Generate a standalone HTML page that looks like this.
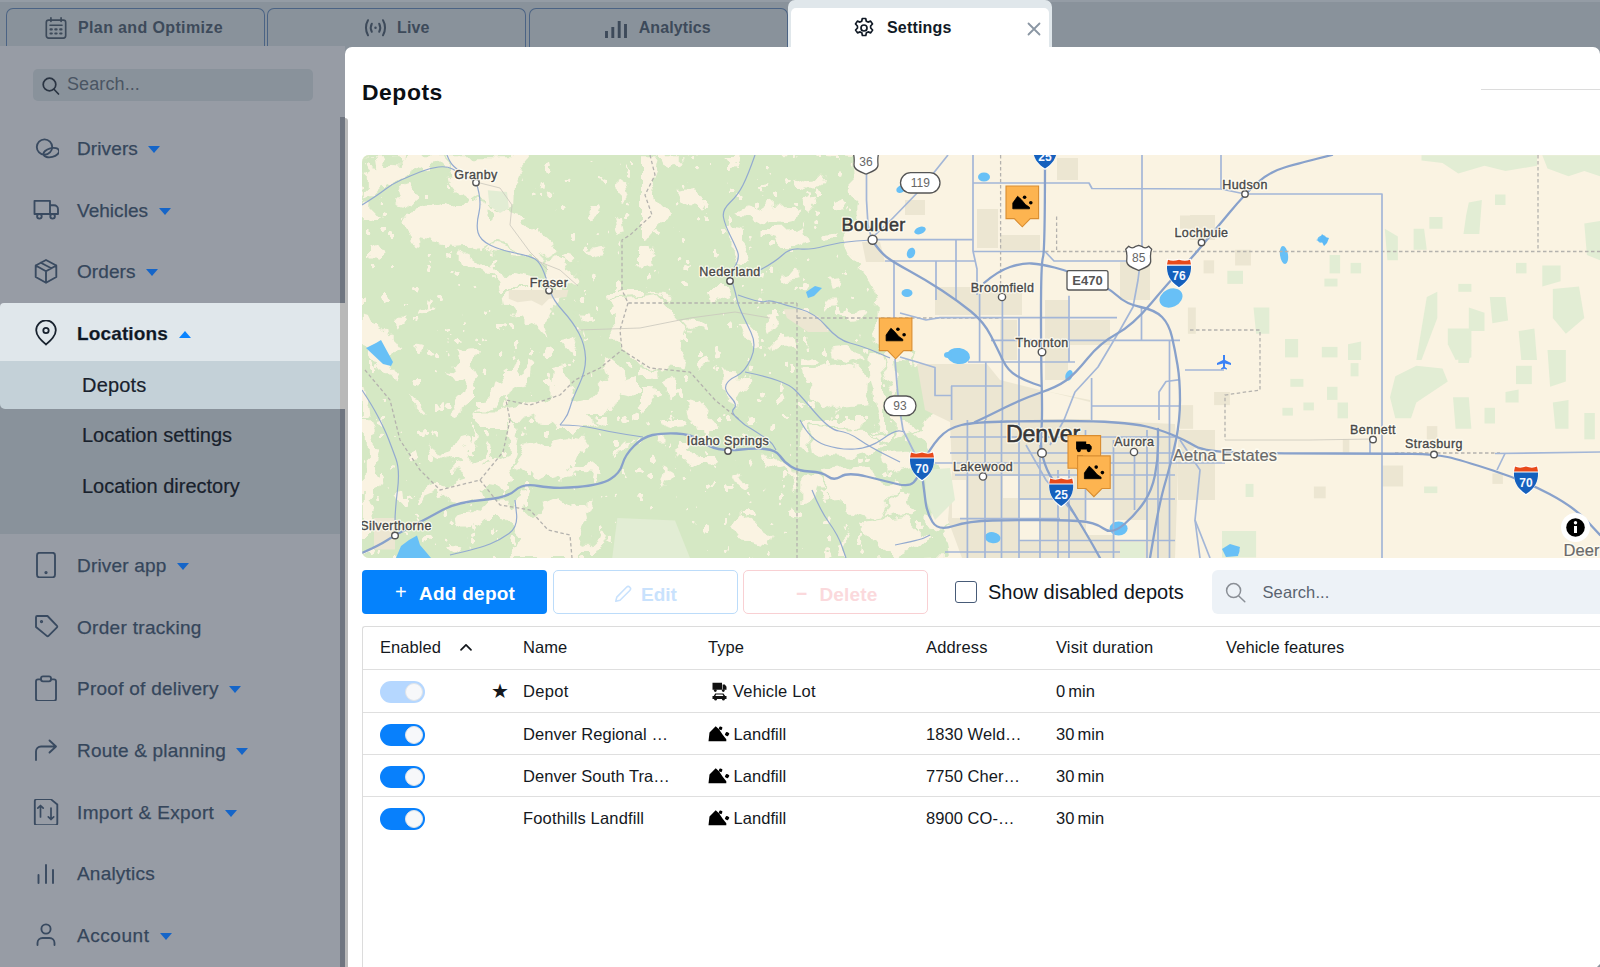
<!DOCTYPE html>
<html lang="en">
<head>
<meta charset="utf-8">
<title>Depots - Settings</title>
<style>
*{box-sizing:border-box;margin:0;padding:0}
html,body{width:1600px;height:967px;overflow:hidden}
body{font-family:"Liberation Sans",sans-serif;background:#89929b;position:relative;color:#1c2530}
.abs{position:absolute}
/* top tabs */
#topbar{position:absolute;left:0;top:0;width:1600px;height:46px;background:#89929b}
#topbar .strip{position:absolute;left:0;top:0;width:1600px;height:2px;background:#949ca5}
.tab{position:absolute;top:8px;height:40px;border:1.500px solid #4b6384;border-bottom:none;border-radius:7px 7px 0 0;background:#89929b;color:#3d4a5a;font-weight:bold;font-size:16px}
.tab span{position:absolute;top:9.500px;white-space:nowrap}
.tab svg{position:absolute}
#tab4{position:absolute;left:788px;top:0;width:264px;height:47px;background:#e0e7eb;border-radius:7px 7px 0 0}
#tab4 .in{position:absolute;left:3px;top:8px;right:3px;bottom:0;background:#fff;border-radius:5px 5px 0 0}
#tab4 span{position:absolute;left:99px;top:19px;font-weight:bold;font-size:16px;color:#111a26}
/* sidebar */
#side{position:absolute;left:0;top:46px;width:345px;height:921px;background:#979ca5}
#sb{position:absolute;left:340px;top:117px;width:5px;height:850px;background:#6f7580}
#sb2{position:absolute;left:345px;top:118px;width:3px;height:849px;background:#b9b9b9;z-index:5;border-radius:0 3px 0 0}#sb3{position:absolute;left:340px;top:303px;width:5px;height:106px;background:#b9b9b9;z-index:5}
#ssearch{position:absolute;left:33px;top:23px;width:280px;height:32px;border-radius:5px;background:#89929b}
#ssearch span{position:absolute;left:34px;top:5px;font-size:18px;letter-spacing:.1px;color:#4a5563}
.mi{position:absolute;left:77px;font-size:19px;color:#35465b;-webkit-text-stroke:.25px #35465b;white-space:nowrap;line-height:24px}
.mi i{display:inline-block;width:0;height:0;border-left:6.500px solid transparent;border-right:6.500px solid transparent;border-top:7.500px solid #1565c8;margin-left:10.500px;vertical-align:2.500px}
.ic{position:absolute;left:33px;width:26px;height:26px}
.ic svg{width:26px;height:26px;fill:none;stroke:#394a60;stroke-width:1.850;stroke-linecap:round;stroke-linejoin:round}
#loc{position:absolute;left:0;top:303px;width:340px;height:58px;background:#e0e7eb;border-radius:4px 0 0 0}
#dep{position:absolute;left:0;top:361px;width:340px;height:48px;background:#c4d1d8;border-radius:0 0 0 5px}
#sub{position:absolute;left:0;top:361px;width:340px;height:173px;background:#89929b}
.smi{position:absolute;left:82px;font-size:20px;color:#18212c;-webkit-text-stroke:.2px #18212c;white-space:nowrap;line-height:24px}
/* modal */
#modal{position:absolute;left:345px;top:47px;width:1255px;height:920px;background:#fff;border-radius:7px 7px 0 0}
h1{position:absolute;left:17px;top:31px;letter-spacing:.55px;font-size:22.900px;font-weight:bold;color:#0b0f14;line-height:28px}
#hr{position:absolute;left:1136px;top:42px;width:119px;height:1px;background:#dcdcdc}
#map{position:absolute;left:17px;top:108px;width:1238px;height:403px;border-radius:7px 0 0 7px;overflow:hidden;background:#faf3e2}
.btn{position:absolute;top:523px;height:44px;border-radius:4px;font-size:19px;text-align:center;line-height:47px;white-space:nowrap}
#b1{left:17px;width:185px;background:#0582fc;color:#fff;font-weight:bold}
#b2{left:208px;width:184.500px;border:1.300px solid #bcdcfa;color:#c9e2fd;font-weight:bold;border-radius:5px}
#b3{left:398px;width:184.500px;border:1.300px solid #f9d0d3;color:#fbd9dc;font-weight:bold;border-radius:5px}
#cb{position:absolute;left:609.5px;top:534px;width:22px;height:21.500px;border:1.500px solid #475b78;border-radius:3px;background:#fff}
#cbl{position:absolute;left:643px;top:532.500px;font-size:20px;color:#10161d;line-height:24px;white-space:nowrap}
#srch{position:absolute;left:867px;top:523px;width:388px;height:44px;background:#edf2f7;border-radius:6px 0 0 6px}
#srch span{position:absolute;left:50.500px;top:12.500px;font-size:16.500px;color:#59636f;letter-spacing:.1px}
#tbl{position:absolute;left:17px;top:579px;width:1238px;height:341px;border-left:1.5px solid #dcdcdc;border-top:1.5px solid #dcdcdc;border-radius:3px 0 0 0}
.hl{position:absolute;left:0;width:1238px;height:1.300px;background:#dfdfdf}
.t{letter-spacing:.06px;position:absolute;font-size:16.5px;color:#14181d;white-space:nowrap;line-height:20px}
.tg{position:absolute;left:16.800px;width:45px;height:22px;margin-top:.8px;border-radius:11px;background:#0880fc}
.tg b{position:absolute;right:2px;top:2px;width:18px;height:18px;border-radius:9px;background:#f7f8fa;border:1px solid #dfe3e8}
.tg.dis{background:#b5d7ff}
</style>
</head>
<body>
<div id="topbar"><div class="strip"></div>
<div class="tab" style="left:6px;width:259px"><svg style="left:36.500px;top:6.500px" width="24" height="24" viewBox="0 0 26 26" fill="none" stroke="#3d4a5a" stroke-width="1.800" stroke-linecap="round" stroke-linejoin="round"><rect x="2.500" y="4.500" width="21" height="19.500" rx="2.500"/><path d="M7.500 2v4M18.500 2v4M6.500 10h13" /><path d="M7 14.500h1.500M12.200 14.500h1.500M17.500 14.500h1.500M7 19h1.500M12.200 19h1.500M17.500 19h1.500" stroke-width="2.200"/></svg><span style="letter-spacing:0.37px;left:71px">Plan and Optimize</span></div>
<div class="tab" style="left:267px;width:259px"><svg style="left:95.500px;top:8px" width="23" height="21.500" viewBox="0 0 26 24" fill="none" stroke="#3d4a5a" stroke-width="2.300" stroke-linecap="round"><path d="M4.500 3.500c-3 5-3 12 0 17M21.500 3.500c3 5 3 12 0 17M8.800 7.500c-1.600 3-1.600 6 0 9M17.200 7.500c1.600 3 1.600 6 0 9"/><circle cx="13" cy="12" r="1.400" fill="#3d4a5a" stroke="none"/></svg><span style="letter-spacing:0.12px;left:129px">Live</span></div>
<div class="tab" style="left:529px;width:259px"><svg style="left:73px;top:6px" width="26" height="26" viewBox="0 0 26 26" fill="none" stroke="#3d4a5a" stroke-width="2.900"><path d="M3.500 23v-7M9.800 23v-11M16.200 23v-17M22.500 23v-14"/></svg><span style="letter-spacing:0.1px;left:108.700px">Analytics</span></div>
</div>
<div id="side">
<div id="ssearch"><svg style="position:absolute;left:8px;top:7px" width="20" height="20" viewBox="0 0 20 20" fill="none" stroke="#2a3442" stroke-width="1.700" stroke-linecap="round"><circle cx="8.500" cy="8.500" r="6.300"/><path d="M13.200 13.500l4.300 4.500"/></svg><span>Search...</span></div>
</div>
<div id="sb"></div>
<div id="sub"></div>
<div id="loc"></div>
<div id="dep"></div>
<div id="tab4"><div class="in"></div><svg style="position:absolute;left:64px;top:16px" width="24" height="24" viewBox="0 0 24 24" fill="none" stroke="#111a26" stroke-width="1.700" stroke-linejoin="round"><path d="M10.300 2.500h3.400l.6 2.700 1.700.9 2.600-1 1.900 2.900-1.900 2 .1 2 1.900 2-1.900 2.900-2.600-1-1.700.9-.6 2.700h-3.400l-.6-2.700-1.700-.9-2.600 1-1.900-2.900 1.900-2-.1-2-1.900-2 1.900-2.900 2.600 1 1.700-.9z"/><circle cx="12" cy="12" r="3"/></svg><span style="letter-spacing:0.17px">Settings</span><svg style="position:absolute;left:239px;top:22px" width="14" height="14" viewBox="0 0 14 14" stroke="#8a96a3" stroke-width="1.800" stroke-linecap="round"><path d="M1.500 1.500l11 11M12.500 1.500l-11 11"/></svg></div>

<div class="mi" style="letter-spacing:0.11px;top:137px">Drivers<i></i></div>
<div class="mi" style="letter-spacing:0.03px;top:199px">Vehicles<i></i></div>
<div class="mi" style="letter-spacing:0.07px;top:260px">Orders<i></i></div>
<div class="mi" style="letter-spacing:0.14px;top:322px;font-weight:bold;color:#0f1721">Locations<i style="border-top:none;border-bottom:7.500px solid #0a84ff"></i></div>
<div class="smi" style="letter-spacing:0.2px;top:373px">Depots</div>
<div class="smi" style="top:423px">Location settings</div>
<div class="smi" style="top:474px">Location directory</div>
<div class="mi" style="letter-spacing:0.18px;top:554px">Driver app<i></i></div>
<div class="mi" style="letter-spacing:0.31px;top:616px">Order tracking</div>
<div class="mi" style="letter-spacing:0.26px;top:677px">Proof of delivery<i></i></div>
<div class="mi" style="letter-spacing:0.2px;top:739px">Route &amp; planning<i></i></div>
<div class="mi" style="letter-spacing:0.35px;top:801px">Import &amp; Export<i></i></div>
<div class="mi" style="letter-spacing:0.2px;top:862px">Analytics</div>
<div class="mi" style="letter-spacing:0.56px;top:924px">Account<i></i></div>


<div class="ic" style="top:135px"><svg viewBox="0 0 26 26"><circle cx="11.500" cy="12" r="7.700"/><ellipse cx="18.300" cy="17.600" rx="8" ry="4.400" transform="rotate(-14 18.300 17.600)"/></svg></div>
<div class="ic" style="top:196px"><svg viewBox="0 0 26 26"><path d="M1.500 4.800h15.500v13.200h-15.500zM17 9.200h4a4 4 0 0 1 4 4v4.800h-8"/><circle cx="6.400" cy="20.300" r="2.300"/><circle cx="19.600" cy="20.300" r="2.300"/></svg></div>
<div class="ic" style="top:258px"><svg viewBox="0 0 26 26"><path d="M13 2L23.300 7.500V19L13 24.800L2.700 19V7.500zM2.700 7.500L13 13.300L23.300 7.500M13 13.300V24.800M7.800 4.800L18.300 10.300"/></svg></div>
<div class="ic" style="top:320px"><svg viewBox="0 0 26 26" style="stroke:#18222e;stroke-width:1.800"><path d="M13 24.500c-5-4.500-9.800-8.800-9.800-14.300a9.800 9.800 0 0 1 19.600 0c0 5.500-4.800 9.800-9.800 14.300z"/><circle cx="13" cy="10.500" r="2.700"/></svg></div>
<div class="ic" style="top:552px"><svg viewBox="0 0 26 26"><rect x="4" y="0.800" width="18" height="24.500" rx="2.500"/><circle cx="13" cy="20.600" r="0.700"/></svg></div>
<div class="ic" style="top:613px"><svg viewBox="0 0 26 26"><path d="M3 4.200a1.200 1.200 0 0 1 1.200-1.200h10.300l9.500 9.800a1.200 1.200 0 0 1 0 1.600l-8.500 8.500a1.200 1.200 0 0 1-1.700 0L3 14z"/><circle cx="8.500" cy="8.500" r="0.700"/></svg></div>
<div class="ic" style="top:675px"><svg viewBox="0 0 26 26"><path d="M8 4.300h-3a2 2 0 0 0-2 2v17.500a2 2 0 0 0 2 2h16a2 2 0 0 0 2-2v-17.500a2 2 0 0 0-2-2h-3"/><rect x="8" y="1.300" width="10" height="5" rx="2"/></svg></div>
<div class="ic" style="top:737px"><svg viewBox="0 0 26 26"><path d="M3 23v-8.500a5 5 0 0 1 5-5h15M16.500 3.500l6.500 6-6.500 6"/></svg></div>
<div class="ic" style="top:799px"><svg viewBox="0 0 26 26"><path d="M1.800 1.200a2 2 0 0 1 2-2h14l6.500 5.500v19.500a2 2 0 0 1-2 2h-18.500a2 2 0 0 1-2-2z" transform="translate(0,-0.200) scale(1,0.960) translate(0,1.200)"/><path d="M7.500 18v-11.500M4.800 9.200l2.700-2.700 2.700 2.700M18 9v11.500M15.300 17.800l2.700 2.700 2.700-2.700" style="stroke-width:1.700"/></svg></div>
<div class="ic" style="top:861px"><svg viewBox="0 0 26 26" style="stroke-width:1.900"><path d="M5.500 22v-8M13 22v-18M20 22v-13"/></svg></div>
<div class="ic" style="top:922px"><svg viewBox="0 0 26 26"><circle cx="13" cy="7" r="4.600"/><path d="M4.500 23v-2a5 5 0 0 1 5-5h7a5 5 0 0 1 5 5v2"/></svg></div>

<div id="modal">
<h1>Depots</h1>
<div id="hr"></div>
<div id="map"><svg width="1238" height="403" viewBox="362 155 1238 403" style="display:block;font-family:'Liberation Sans',sans-serif">
<rect x="362" y="155" width="1238" height="403" fill="#faf3e2"/>
<defs><filter id="rough" x="-5%" y="-5%" width="110%" height="110%"><feTurbulence type="fractalNoise" baseFrequency="0.045" numOctaves="3" seed="7" result="n"/><feDisplacementMap in="SourceGraphic" in2="n" scale="22" xChannelSelector="R" yChannelSelector="G"/></filter><clipPath id="mapclip"><rect x="362" y="155" width="1238" height="403"/></clipPath></defs>
<g filter="url(#rough)">
<polygon points="342,135 852,155 853,200 850,225 843,240 850,256 866,275 874,300 873,330 884,360 888,385 903,400 907,430 925,445 938,470 928,500 942,520 950,558 342,578" fill="#d5e8c4"/>
<g fill="#faf3e2" stroke="#d5e8c4" stroke-width="2" stroke-linejoin="round">
<polygon points="361.8,155.3 445.8,155.3 451,165.8 437,167.5 426.5,169.3 412.5,176.3 398.5,181.5 382.8,188.5 370.5,200.8 361.8,202.5"/>
<polygon points="445.8,155.3 526.3,155.3 528,164 518.4,174.5 514,185 513.1,207.8 507,218.3 498.3,220 489.5,232.3 487.8,239.3 475.5,241 472,232.3 465,237.5 459.8,227 466.8,216.5 461.5,207.8 468.5,199 458,193.8 454.5,185 447.5,183.3 444,169.3"/>
<polygon points="475.5,241 487.8,239.3 500,244.5 517.5,248 536.8,251.5 552.5,253.3 563,262 577,270.8 580.5,283 570,290 557.8,290 545.5,279.5 543.8,263.8 528,258.5 507,256.8 489.5,251.5"/>
<polygon points="458,248 472,255 482.5,263.8 500,270.8 517.5,272.5 535,276 545.5,290 500,290 496.5,279.5 482.5,272.5 472,270.8 461.5,263.8"/>
<polygon points="361.8,206 372.3,207.8 379.3,216.5 370.5,223.5 361.8,225.3"/>
<polygon points="395,190.3 412.5,185 417.8,195.5 410.8,207.8 398.5,204.3"/>
<polygon points="417.8,216.5 430,213 438.8,223.5 433.5,234 421.3,228.8"/>
<polygon points="367,248 377.5,244.5 384.5,255 375.8,262 367,258.5"/>
<polygon points="585.8,204.3 598,200.8 603.3,213 592.8,218.3"/>
<polygon points="619,179.8 629.5,176.3 633,195.5 622.5,202.5 617.3,192"/>
<polygon points="535,181.5 542,179.8 540.3,192 533.3,193.8"/>
<polygon points="613.8,214.8 622.5,216.5 626,232.3 617.3,234"/>
<polygon points="557.8,255 570,251.5 580.5,258.5 573.5,265.5"/>
<polygon points="587.5,248 605,244.5 608.5,255 594.5,258.5"/>
<polygon points="640,155.3 661,155.3 657.5,171 652.3,185 659.3,202.5 668,211.3 662.8,223.5 652.3,234 640,241"/>
<polygon points="661,155.3 685.5,155.3 680.3,164 666.3,167.5"/>
<polygon points="675,190.3 690.8,186.8 697.8,195.5 706.5,200.8 701.3,209.5 687.3,207.8 680.3,200.8"/>
<polygon points="731,207.8 745,204.3 762.5,209.5 773,202.5 790.5,200.8 797.5,209.5 794,220 780,223.5 769.5,220 755.5,223.5 738,220"/>
<polygon points="727.5,227 745,230.5 752,241 748.5,258.5 738,262 731,248"/>
<polygon points="762.5,227 773,227 808,225.3 811.5,241 794,248 780,248 773,241 762.5,237.5"/>
<polygon points="790.5,183.3 808,176.3 823.8,174.5 822,185 801,192 790.5,192"/>
<polygon points="802.8,200.8 815,197.3 818.5,207.8 811.5,216.5 802.8,213"/>
<polygon points="720.5,157 745,157 743.3,165.8 727.5,167.5"/>
<polygon points="640,248 650.5,244.5 659.3,255 650.5,265.5 640,269"/>
<polygon points="680.3,262 692.5,265.5 689,276 680.3,274.3"/>
<polygon points="774.8,269 797.5,265.5 801,276 780,279.5"/>
<polygon points="825.5,277.8 843,276 841.3,288.3 829,290"/>
<polygon points="832.5,199 843,195.5 846.5,207.8 836,209.5"/>
<polygon points="823.8,234 839.5,232.3 837.8,241 825.5,242.8"/>
<polygon points="762.5,181.5 773,179.8 771.3,186.8 762.5,188.5"/>
<polygon points="451,349.5 472,346 479,354.8 475.5,367 480.8,377.5 472,388 472,402 458,412.5 451,409 461.5,395 463.3,381 451,377.5 445.8,370.5 454.5,363.5"/>
<polygon points="507,365.3 514,363.5 517.5,372.3 524.5,367 528,360 533.3,363.5 531.5,377.5 522.8,388 510.5,396.8 500,403.8 493,412.5 482.5,416 472,412.5 482.5,402 493,393.3 494.8,384.5 501.8,384.5 507,377.5"/>
<polygon points="472,412.5 493,412.5 510.5,405.5 535,402 552.5,395 552.5,381 554.3,365.3 561.3,363.5 564.8,374 570,388 571.8,402 587.5,398.5 596.3,388 605,377.5 601.5,363.5 608.5,360 622.5,370.5 633,377.5 640,374 640,398.5 622.5,395 617.3,412.5 605,423 587.5,430 549,430 552.5,423 535,419.5 517.5,423 514,430 482.5,430 473.8,423"/>
<polygon points="507,290 568.3,290 566.5,300.5 552.5,311 547.3,325 542,333.8 535,325 528,328.5 517.5,318 510.5,321.5 514,307.5 508.8,300.5"/>
<polygon points="559.5,340.8 575.3,337.3 580.5,347.8 566.5,351.3"/>
<polygon points="608.5,290 640,290 640,333.8 633,347.8 622.5,347.8 617.3,335.5 622.5,321.5 612,312.8"/>
<polygon points="361.8,309.3 370.5,311 377.5,325 389.8,335.5 398.5,347.8 391.5,360 398.5,377.5 402,384.5 395,384.5 386.3,372.3 377.5,368.8 365.3,353 361.8,347.8"/>
<polygon points="391.5,323.3 402,312.8 407.3,318 398.5,332"/>
<polygon points="410.8,340.8 421.3,342.5 426.5,349.5 417.8,353"/>
<polygon points="361.8,388 370.5,395 372.3,412.5 365.3,430 361.8,430"/>
<polygon points="409,393.3 417.8,402 426.5,412.5 421.3,414.3 412.5,405.5"/>
<polygon points="417.8,309.3 437,304 438.8,307.5 421.3,316.3"/>
<polygon points="575.3,311 585.8,312.8 587.5,323.3 578.8,321.5"/>
<polygon points="640,323.3 650.5,319.8 661,325 675,321.5 685.5,318 699.5,319.8 710,323.3 706.5,330.3 692.5,328.5 682,333.8 675,342.5 664.5,340.8 654,347.8 647,342.5 640,347.8"/>
<polygon points="706.5,290 731,290 734.5,300.5 724,304 710,300.5"/>
<polygon points="640,363.5 654,360 661,367 654,375.8 640,377.5"/>
<polygon points="657.5,381 671.5,377.5 680.3,388 675,398.5 662.8,395"/>
<polygon points="722.3,372.3 745,374 752,381 745,388 738,398.5 739.8,409 731,412.5 724,402 727.5,395 722.3,384.5"/>
<polygon points="738,326.8 752,325 762.5,335.5 766,347.8 757.3,353 752,342.5 743.3,339"/>
<polygon points="762.5,316.3 773,314.5 778.3,325 769.5,330.3"/>
<polygon points="769.5,342.5 794,340.8 797.5,351.3 780,353 771.3,349.5"/>
<polygon points="829,349.5 846.5,347.8 860.5,353 867.5,363.5 857,365.3 841.3,360 830.8,358.3"/>
<polygon points="837.8,377.5 850,377.5 860.5,388 850,398.5 841.3,391.5"/>
<polygon points="825.5,398.5 837.8,396.8 844.8,409 832.5,416 825.5,409"/>
<polygon points="867.5,347.8 881.5,351.3 888.5,360 885,372.3 885,430 872.8,430 878,412.5 874.5,388 869.3,372.3"/>
<polygon points="685.5,398.5 699.5,402 710,416 720.5,430 692.5,430 689,416"/>
<polygon points="640,388 650.5,388 654,402 647,412.5 640,412.5"/>
<polygon points="773,402 785.3,388 790.5,395 780,410.8"/>
<polygon points="802.8,356.5 813.3,354.8 815,365.3 804.5,367"/>
<polygon points="671.5,349.5 682,347.8 685.5,356.5 675,360"/>
<polygon points="692.5,360 706.5,356.5 713.5,367 699.5,370.5"/>
<polygon points="822,300.5 832.5,300.5 836,311 825.5,312.8"/>
<polygon points="846.5,307.5 865.8,305.8 867.5,316.3 850,318"/>
<polygon points="640,295.3 657.5,291.8 675,295.3 671.5,300.5 650.5,302.3 640,304"/>
<polygon points="361.8,420 372.3,420 375.8,430.5 370.5,441 377.5,451.5 374,465.5 381,477.8 375.8,490 370.5,502.3 377.5,518 370.5,532 361.8,532"/>
<polygon points="428.3,437.5 435.3,442.8 442.3,455 451,453.3 458,437.5 465,435.8 468.5,444.5 473.8,430.5 477.3,428.8 475.5,442.8 468.5,458.5 479,455 489.5,439.3 491.3,448 482.5,462 494.8,460.3 505.3,455 510.5,437.5 503.5,420 517.5,420 521,437.5 517.5,455 514,465.5 517.5,476 508.8,481.3 503.5,490 486,486.5 482.5,497 465,500.5 451,497 438.8,500.5 435.3,493.5 419.5,500.5 414.3,504 417.8,493.5 430,486.5 447.5,483 465,477.8 458,472.5 451,472.5 451,467.3 458,462 447.5,463.8 437,458.5 430,448"/>
<polygon points="524.5,442.8 535,441 549,448 552.5,437.5 566.5,434 580.5,437.5 587.5,448 577,455 568.3,463.8 580.5,467.3 594.5,463.8 605,470.8 594.5,476 570,474.3 552.5,479.5 535,472.5 524.5,470.8 514,465.5 521,455"/>
<polygon points="458,514.5 472,511 482.5,502.3 508.8,500.5 512.3,511 517.5,493.5 528,490 531.5,498.8 528,511 535,518 545.5,504 561.3,497 570,502.3 587.5,495.3 592.8,497 585.8,511 587.5,525 580.5,539 587.5,549.5 596.3,540.8 601.5,528.5 608.5,532 601.5,546 594.5,557.9 510.5,557.9 508.8,546 517.5,532 510.5,528.5 500,518 487.8,518 480.8,525 472,521.5 465,528.5 459.8,525"/>
<polygon points="451,540.8 461.5,542.5 458,553 449.3,549.5"/>
<polygon points="591,420 622.5,420 626,427 605,427"/>
<polygon points="622.5,441 633,439.3 629.5,448 619,451.5"/>
<polygon points="407.3,451.5 414.3,449.8 417.8,460.3 410.8,463.8"/>
<polygon points="393.3,493.5 403.8,490 405.5,500.5 396.8,502.3"/>
<polygon points="661,420 685.5,420 689,428.8 675,430.5 662.8,427"/>
<polygon points="652.3,437.5 664.5,437.5 664.5,444.5 654,444.5"/>
<polygon points="675,449.8 685.5,446.3 692.5,455 713.5,455 724,460.3 710,465.5 697.8,463.8 690.8,470.8 687.3,462 676.8,458.5"/>
<polygon points="662.8,463.8 673.3,469 675,477.8 666.3,479.5 662.8,490 659.3,477.8"/>
<polygon points="731,469 738,472.5 743.3,481.3 752,486.5 748.5,495.3 739.8,490 734.5,479.5"/>
<polygon points="731,521.5 745,516.3 762.5,528.5 773,535.5 769.5,546 752,542.5 738,540.8 734.5,532"/>
<polygon points="766,455 776.5,453.3 785.3,463.8 794,472.5 797.5,490 792.3,493.5 788.8,477.8 780,469 769.5,463.8"/>
<polygon points="799.3,420 865.8,420 864,428.8 850,435.8 832.5,437.5 815,444.5 808,451.5 799.3,449.8"/>
<polygon points="867.5,432.3 892,427 892,441 881.5,448 867.5,446.3"/>
<polygon points="799.3,472.5 815,474.3 825.5,481.3 832.5,486.5 818.5,490 816.8,502.3 825.5,518 815,525 804.5,518 799.3,521.5"/>
<polygon points="820.3,488.3 834.3,490 837.8,502.3 830.8,511 822,502.3"/>
<polygon points="872.8,502.3 885,497 899,497 913,490 920,493.5 920,514.5 906,518 892,514.5 881.5,518 874.5,511"/>
<polygon points="829,514.5 843,518 850,532 843,546 846.5,557.9 832.5,557.9 836,542.5 830.8,528.5"/>
<polygon points="867.5,528.5 885,532 888.5,546 874.5,549.5 865.8,540.8"/>
<polygon points="804.5,532 815,528.5 825.5,535.5 822,549.5 808,553 801,542.5"/>
<polygon points="881.5,455 909.5,451.5 913,469 892,472.5 883.3,465.5"/>
<polygon points="640,525 647,528.5 645.3,539 640,540.8"/>
<polygon points="893.8,420 920,420 920,427 902.5,434 892,430.5"/>
<polygon points="879.8,350 916.5,350 911.3,381.5 927,402.5 916.5,428.8 892.9,436.6 895.5,402.5 885,376.3"/>
<polygon points="927,497 948,491.8 953.3,518 937.5,533.8 927,518"/>
<polygon points="805,370 845,362 872,378 868,408 830,412 808,398"/>
<polygon points="808,428 868,430 890,446 850,456 812,452"/>
<polygon points="400,215 470,200 520,215 560,250 540,262 500,245 450,248 410,240"/>
<polygon points="610,300 660,296 690,330 680,372 640,366 612,340"/>
<polygon points="820,470 870,466 900,490 880,520 840,512"/>
<polygon points="860,520 905,515 930,540 900,556 866,548"/>
</g>
<g fill="#d5e8c4">
<polygon points="362.6,156.1 377.5,157 379.3,169.3 370.5,167.5 362.6,172.8"/>
<polygon points="382.8,157 403.8,156.1 400.3,164 386.3,163.1"/>
<polygon points="482.5,209.5 493,211.3 491.3,220 482.5,220"/>
<polygon points="601.5,157 622.5,157 619,169.3 605,171"/>
<polygon points="619,393.3 640,398.5 640,430 608.5,430 613.8,412.5"/>
<polygon points="557.8,479.5 592.8,479.5 592.8,502.3 578.8,504 557.8,493.5"/>
<polygon points="958.5,518 1016.3,512.8 1016.3,533.8 990,554.8 963.8,549.5"/>
<polygon points="787.9,502.3 845.6,497 848.3,533.8 806.3,560 787.9,560"/>
<polygon points="893,362 925,366 936,398 918,428 902,420"/>
<polygon points="905,470 935,470 945,500 925,520 908,500"/>
</g>
</g>
<filter id="speck" color-interpolation-filters="sRGB" x="0" y="0" width="100%" height="100%"><feTurbulence type="fractalNoise" baseFrequency="0.09 0.075" numOctaves="3" seed="23" result="n"/><feColorMatrix in="n" type="matrix" values="0 0 0 0 0.98  0 0 0 0 0.953  0 0 0 0 0.886  0 0 0 50 -35.5"/></filter>
<clipPath id="fclip"><polygon points="362,155 852,155 853,200 850,225 843,240 850,256 866,275 874,300 873,330 884,360 888,385 903,400 907,430 925,445 938,470 928,500 942,520 950,558 362,558" fill="#000"/></clipPath>
<g clip-path="url(#fclip)"><rect x="362" y="155" width="620" height="403" filter="url(#speck)"/></g>
<g fill="#e2edd4">
<polygon points="487.8,190.3 507,192 508.8,207.8 500,213 489.5,206"/>
<polygon points="640,532 675,535.5 689,557.9 640,557.9"/>
<polygon points="617.3,518 675,520.6 690.8,560 612,560"/>
<polygon points="1421.5,155.3 1537,155.3 1537,165.8 1505.5,171 1484.5,165.8 1458.3,173.6 1442.5,163.1 1421.5,160.5"/>
<polygon points="1542.3,155.3 1600,155.3 1600,176.3 1584.3,171 1568.5,176.3 1547.5,168.4"/>
<polygon points="1468.8,202.5 1481.9,199.9 1479.3,234 1463.5,234 1466.1,215.6"/>
<polygon points="1495,194.6 1505.5,194.6 1505.5,205.1 1495,205.1"/>
<polygon points="1429.4,216.9 1442.5,216.9 1442.5,228.8 1429.4,228.8"/>
<polygon points="1413.6,228.8 1424.1,228.8 1426.8,249.8 1413.6,249.8"/>
<polygon points="1384.8,228.8 1397.9,236.6 1397.9,260.3 1387.4,260.3"/>
<polygon points="1516,262.9 1526.5,262.9 1526.5,273.4 1516,273.4"/>
<polygon points="1458.3,283.9 1471.4,283.9 1471.4,291.8 1458.3,291.8"/>
<polygon points="1542.3,265.5 1560.6,265.5 1560.6,281.3 1542.3,286.5"/>
<polygon points="1552.8,289.1 1579,286.5 1584.3,318 1565.9,333.8 1552.8,318"/>
<polygon points="1584.3,223.5 1600,220.9 1600,260.3 1586.9,255"/>
<polygon points="1468.8,307.5 1484.5,312.8 1484.5,331.1 1468.8,331.1"/>
<polygon points="1447.8,328.5 1471.4,328.5 1471.4,357.4 1455.6,360 1447.8,344.3"/>
<polygon points="1489.8,297 1505.5,297 1508.1,320.6 1492.4,323.3"/>
<polygon points="1518.6,331.1 1534.4,328.5 1537,360 1521.3,360"/>
<polygon points="1426.8,297 1437.3,291.8 1437.3,318 1429.4,339 1421.5,360 1416.3,360"/>
<polygon points="1329.6,255 1340.1,255 1340.1,273.4 1329.6,273.4"/>
<polygon points="1350.6,262.9 1361.1,262.9 1361.1,273.4 1350.6,273.4"/>
<polygon points="1324.4,278.6 1337.5,278.6 1337.5,286.5 1324.4,286.5"/>
<polygon points="1227.3,270.8 1243,270.8 1243,283.9 1227.3,283.9"/>
<polygon points="1253.5,307.5 1269.3,307.5 1269.3,333.8 1256.1,333.8"/>
<polygon points="1285,339 1298.1,339 1298.1,357.4 1285,357.4"/>
<polygon points="1348,344.3 1361.1,341.6 1361.1,360 1348,360"/>
<polygon points="1321.8,346.9 1337.5,346.9 1337.5,357.4 1321.8,357.4"/>
<polygon points="1395.3,376.3 1416.3,365.8 1442.5,368.4 1447.8,381.5 1432,392 1416.3,402.5 1411,418.3 1395.3,418.3 1390,397.3"/>
<polygon points="1453,397.3 1468.8,397.3 1471.4,428.8 1455.6,428.8"/>
<polygon points="1484.5,407.8 1495,407.8 1495,423.5 1484.5,423.5"/>
<polygon points="1516,365.8 1531.8,365.8 1531.8,384.1 1516,384.1"/>
<polygon points="1547.5,350 1565.9,350 1565.9,381.5 1550.1,386.8"/>
<polygon points="1552.8,402.5 1568.5,399.9 1568.5,428.8 1555.4,428.8"/>
<polygon points="1584.3,413 1594.8,413 1594.8,439.3 1584.3,439.3"/>
<polygon points="1458.3,350 1471.4,350 1468.8,363.1 1458.3,363.1"/>
<polygon points="1505.5,392 1518.6,389.4 1518.6,402.5 1505.5,402.5"/>
<polygon points="1327,386.8 1337.5,386.8 1337.5,399.9 1327,399.9"/>
<polygon points="1337.5,402.5 1348,402.5 1348,418.3 1337.5,418.3"/>
<polygon points="1303.4,402.5 1313.9,402.5 1313.9,410.4 1303.4,410.4"/>
<polygon points="1282.4,407.8 1292.9,407.8 1292.9,415.6 1282.4,415.6"/>
<polygon points="1290.3,378.9 1303.4,378.9 1303.4,386.8 1290.3,386.8"/>
<polygon points="1222,531.1 1256.1,531.1 1256.1,557.4 1222,557.4"/>
<polygon points="1245.6,483.9 1253.5,483.9 1253.5,497 1245.6,497"/>
<polygon points="1424.1,486.5 1437.3,486.5 1437.3,493.1 1424.1,493.1"/>
<polygon points="1350.6,363.1 1358.5,363.1 1358.5,376.3 1350.6,376.3"/>
</g>
<g fill="#ece6d2">
<polygon points="1180,215.6 1190.5,215.6 1190.5,228.8 1180,228.8"/>
<polygon points="1235.1,249.8 1250.9,249.8 1250.9,265.5 1235.1,265.5"/>
<polygon points="1203.6,260.3 1214.1,260.3 1214.1,273.4 1203.6,273.4"/>
<polygon points="1187.9,307.5 1195.8,307.5 1195.8,333.8 1187.9,333.8"/>
<polygon points="1214.1,392 1229.9,392 1229.9,405.1 1214.1,405.1"/>
<polygon points="1180,405.1 1193.1,405.1 1193.1,428.8 1180,428.8"/>
<polygon points="1203.6,462.9 1214.1,462.9 1214.1,476 1203.6,476"/>
<polygon points="1313.9,486.5 1325.7,486.5 1325.7,498.3 1313.9,498.3"/>
<polygon points="1382.1,465.5 1403.1,465.5 1403.1,486.5 1382.1,486.5"/>
<polygon points="1426.8,426.1 1437.3,426.1 1437.3,439.3 1426.8,439.3"/>
<polygon points="1342.8,439.3 1349.3,439.3 1349.3,452.4 1342.8,452.4"/>
<polygon points="1492.4,473.4 1502.9,473.4 1502.9,483.9 1492.4,483.9"/>
<polygon points="783.5,309.3 797.5,309.3 818.5,316.3 829,332 808,332 797.5,325 787,318"/>
<polygon points="508.8,290 535,290 545.5,290 568.3,290 566.5,297 549,298.8 542,305.8 531.5,300.5 517.5,302.3 508.8,298.8"/>
<polygon points="374,518 395,518 395,549.5 374,549.5"/>
<polygon points="950,422 1000,418 1090,420 1175,424 1178,470 1175,558 962,558 948,520 952,470"/>
<polygon points="917,364 987,364 1000,380 1040,390 1090,400 1090,420 950,422 925,410"/>
<polygon points="935,287 1022,287 1022,315 935,315"/>
<polygon points="1000,320 1017,320 1017,360 1000,360"/>
<polygon points="1045,300 1068,300 1068,380 1045,380"/>
<polygon points="1070,320 1110,320 1110,345 1070,345"/>
<polygon points="977,209 998,209 998,248 977,248"/>
<polygon points="1000,235 1040,235 1040,250 1000,250"/>
<polygon points="1057,158 1078,158 1078,180 1057,180"/>
<polygon points="862,242 880,242 885,262 866,262"/>
<polygon points="905,200 925,200 925,215 905,215"/>
<polygon points="1120,262 1150,262 1150,300 1120,300"/>
<polygon points="1190,215 1215,215 1215,240 1190,240"/>
<polygon points="1178,430 1215,430 1215,500 1178,500"/>
</g>
<g fill="#faf3e2">
<polygon points="1020,500 1040,500 1040,540 1020,540"/>
<polygon points="1086,500 1113,500 1113,535 1086,535"/>
<polygon points="1060,476 1068,476 1068,498 1060,498"/>
<polygon points="952,480 966,480 966,518 952,518"/>
<polygon points="1003,476 1018,476 1018,498 1003,498"/>
<polygon points="1115,520 1146,520 1146,540 1115,540"/>
<polygon points="1042,390 1090,402 1090,419 1042,419"/>
</g>
<g fill="#e2edd4">
<polygon points="925,470 950,468 955,500 935,520 926,500"/>
<polygon points="1120,542 1145,542 1145,558 1120,558"/>
</g>
<g fill="#68c0f6">
<ellipse cx="901" cy="189" rx="5" ry="3.5" transform="rotate(-30 901 189)"/>
<ellipse cx="984" cy="177" rx="6" ry="4.5" transform="rotate(0 984 177)"/>
<ellipse cx="920" cy="230.5" rx="6" ry="3.5" transform="rotate(-20 920 230.5)"/>
<ellipse cx="911" cy="253" rx="4" ry="5.5" transform="rotate(20 911 253)"/>
<ellipse cx="907" cy="293" rx="5.5" ry="4" transform="rotate(0 907 293)"/>
<ellipse cx="958.6" cy="356" rx="11.5" ry="8" transform="rotate(8 958.6 356)"/>
<ellipse cx="1171" cy="298" rx="12" ry="9" transform="rotate(-25 1171 298)"/>
<ellipse cx="1069" cy="375.4" rx="3.5" ry="5.5" transform="rotate(20 1069 375.4)"/>
<ellipse cx="1118.6" cy="528.5" rx="9" ry="7" transform="rotate(0 1118.6 528.5)"/>
<ellipse cx="992.6" cy="537.7" rx="8" ry="5.5" transform="rotate(10 992.6 537.7)"/>
<ellipse cx="1232.5" cy="551" rx="7" ry="5" transform="rotate(0 1232.5 551)"/>
<ellipse cx="1322" cy="239" rx="4.5" ry="3.5" transform="rotate(-20 1322 239)"/>
<ellipse cx="1284" cy="255" rx="4" ry="9" transform="rotate(-8 1284 255)"/>
<ellipse cx="948" cy="355" rx="4" ry="3" transform="rotate(0 948 355)"/>
<polygon points="366,348 376,343 381,340 393,362 391,366 383,364"/>
<polygon points="396,558 401,546 409,540 417,535.5 420,545 426,552 431,558"/>
<polygon points="806,292 815,286 822,288 814,296 808,298"/>
<polygon points="1222,549 1230,544 1240,547 1238,556 1226,557"/>
</g>
<g fill="none" stroke="#b4b2ae" stroke-width="1.3" stroke-dasharray="3.5 2.5">
<path d="M650 155 L655 175 L645 195 L652 215 L630 235 L622 240 L622 290 L628 303 L797 303"/>
<path d="M628 303 L620 330 L622 350 L650 368 L690 372 L715 400 L740 420"/>
<path d="M365 370 L390 400 L400 440 L420 470 L440 490 L480 480 L503 452 L510 420 L506 400 L530 405 L560 395 L575 380 L600 368 L622 350"/>
<path d="M480 480 L500 505 L530 510 L548 530 L570 535 L572 558"/>
<path d="M797 303 L797 558"/>
<path d="M797 318 L1000 318"/>
<path d="M1000.6 155 L1000.6 290"/>
<path d="M1045 251.5 L1600 251.5"/>
<path d="M1056.6 216.5 L1056.6 251.5"/>
<path d="M1538 155 L1538 251.5"/>
<path d="M1190 330 L1260 330 L1260 390 L1225 395 L1225 440"/>
<path d="M1395 453 L1500 453"/>
</g>
<g fill="none" stroke="#c9c6bd" stroke-width="0.8">
<path d="M540 262 L560 270 L578 286"/>
<path d="M476 182 L500 188 L512 205 L510 225 L530 252 L548 270"/>
<path d="M578 330 L640 328 L690 318 L735 312 L770 318"/>
<path d="M1225 440 L1310 440 L1373 439"/>
</g>
<g fill="none" stroke="#93aad0" stroke-width="1.2" stroke-linejoin="round">
<path d="M362 205 Q378 195 385.0 189.5 Q392 184 401.0 180.0 Q410 176 420.0 172.0 Q430 168 438.5 167.0 Q447 166 452.5 169.0 Q458 172 467.0 177.0 L476 182"/>
<path d="M447 155 Q450 163 454.0 166.5 L458 170"/>
<path d="M476 182 Q482 200 479.0 212.5 Q476 225 478.0 232.5 Q480 240 490.0 245.0 Q500 250 515.0 253.0 Q530 256 535.0 259.0 Q540 262 544.0 272.5 Q548 283 550.5 291.5 Q553 300 563.0 311.0 Q573 322 579.0 333.5 Q585 345 585.5 357.5 Q586 370 579.0 385.0 Q572 400 570.0 407.5 Q568 415 564.0 420.0 L560 425"/>
<path d="M560 425 Q580 425 595.0 428.5 Q610 432 626.5 434.5 L643 437"/>
<path d="M755 155 Q748 175 743.0 185.0 Q738 195 730.0 202.5 Q722 210 723.5 217.5 Q725 225 730.0 235.0 Q735 245 737.5 251.5 Q740 258 735.0 266.5 L730 275"/>
<path d="M760 270 Q775 262 782.5 255.0 Q790 248 800.0 249.0 Q810 250 825.0 246.0 Q840 242 856.0 241.0 L872 240"/>
<path d="M730 275 Q735 290 736.5 297.5 Q738 305 741.5 312.5 Q745 320 751.0 332.5 Q757 345 751.0 358.5 Q745 372 736.5 376.0 Q728 380 726.0 385.0 Q724 390 731.0 397.5 Q738 405 734.0 408.5 Q730 412 737.5 418.5 L745 425"/>
<path d="M738 295 Q760 303 765.0 301.5 Q770 300 777.5 302.5 Q785 305 800.0 309.0 Q815 313 826.5 326.5 Q838 340 850.0 343.0 Q862 346 876.0 352.0 L890 358"/>
<path d="M745 372 Q765 376 777.5 380.5 Q790 385 795.0 390.0 Q800 395 815.0 412.5 Q830 430 839.0 431.0 Q848 432 859.0 439.5 Q870 447 885.0 454.5 L900 462"/>
<path d="M745 425 Q770 440 773.0 445.0 L776 450"/>
<path d="M812 490 Q820 510 829.0 522.5 Q838 535 842.0 546.5 L846 558"/>
<path d="M362 390 Q372 405 378.5 417.5 Q385 430 388.5 439.0 Q392 448 396.0 459.0 Q400 470 397.5 490.0 Q395 510 395.0 522.5 L395 535"/>
<path d="M450 555 Q480 548 490.0 544.0 Q500 540 509.0 533.5 Q518 527 516.5 513.5 L515 500"/>
<path d="M800 420 Q810 440 825.0 445.0 Q840 450 855.0 449.0 Q870 448 882.5 439.0 Q895 430 900.0 431.0 L905 432"/>
<path d="M895 545 Q920 540 925.0 537.5 L930 535"/>
</g>
<g fill="none" stroke="#a3b6d7" stroke-width="1.700" stroke-linejoin="round">
<path d="M866.5 155 L866.5 200 L868 225 L872 240"/>
<path d="M874 236 L890 221 L920 190 L948 155"/>
<path d="M973 155 L973 251 L977 269 L977 295"/>
<path d="M973 183 L1089 183 L1092 188.5 L1221 189 L1245 194"/>
<path d="M973 251.5 L1045 251.5"/>
<path d="M872 239.6 L973 239.6"/>
<path d="M885 261 L975 261"/>
<path d="M1045 251.5 L1054 261 L1126 261"/>
<path d="M1142 155 L1142 248 L1138 280 L1133 307 L1120 330 L1098 367 L1075 392 L1064 420 L1050 445"/>
<path d="M956 239.6 L956 300"/>
<path d="M936 261 L936 300"/>
<path d="M894 260 L894 320"/>
<path d="M1245 194 L1382 194 L1382 558"/>
<path d="M1221 155 L1221 189"/>
<path d="M900 313 L926 320 L940 317.6 L1117 317.6"/>
<path d="M991 340.4 L1180 340.4"/>
<path d="M968 362 L1075 362"/>
<path d="M951 386 L1002 386"/>
<path d="M1091.6 406 L1180 406"/>
<path d="M979.6 294 L979.6 362"/>
<path d="M1002.4 298 L1002.4 420"/>
<path d="M1019 317.6 L1019 420"/>
<path d="M1069 295.7 L1069 362"/>
<path d="M985.8 362 L985.8 420"/>
<path d="M951.6 386 L951.6 420"/>
<path d="M1091.6 378 L1091.6 420"/>
<path d="M1169.5 340 L1169.5 420"/>
<path d="M1141.5 308 L1141.5 340"/>
<path d="M900 357 L917 362 L935 367.5 L935 395.5 L951 395.5"/>
<path d="M1180 379.7 L1166 381.5 L1159 392 L1159 420"/>
<path d="M895 359 L897 385 L899 405 L903 430 L921 466"/>
<path d="M967.4 420 L967.4 558"/>
<path d="M985 420 L985 558"/>
<path d="M1001.5 420 L1001.5 558"/>
<path d="M1019 420 L1019 558"/>
<path d="M1040 445 L1040 558"/>
<path d="M1058 470 L1058 558"/>
<path d="M1069 470 L1069 558"/>
<path d="M1085.5 430 L1085.5 520"/>
<path d="M1113.5 440 L1113.5 558"/>
<path d="M1134.5 455 L1134.5 510"/>
<path d="M1147 430 L1147 558"/>
<path d="M1158 429 L1158 558"/>
<path d="M1169.5 420 L1169.5 558"/>
<path d="M935 463 L1225 463"/>
<path d="M950 453 L1200 453"/>
<path d="M955 475 L1175 475"/>
<path d="M1019 499 L1175 499"/>
<path d="M960 518.6 L1060 518.6"/>
<path d="M1019 540.5 L1175 540.5"/>
<path d="M945 552 L1120 552"/>
<path d="M950 437 L1175 437"/>
<path d="M1026 445 L1046 480 L1075 515"/>
<path d="M1180 440 L1200 470 L1195 520 L1200 558"/>
<path d="M1185 370 L1224 370"/>
<path d="M1370 442 L1370 453.5"/>
<path d="M1495 453.5 L1600 452"/>
<path d="M1505 453.5 L1497 470"/>
<path d="M1195 520 L1210 558"/>
</g>
<g fill="none" stroke="#88a1cb" stroke-width="2.300" stroke-linejoin="round" stroke-linecap="round">
<path d="M362 553 Q380 545 387.5 540.0 Q395 535 411.5 526.5 Q428 518 442.5 510.0 Q457 502 482.0 500.0 Q507 498 515.0 490.5 Q523 483 538.5 486.0 Q554 489 577.5 487.0 Q601 485 610.5 479.0 Q620 473 622.5 464.0 Q625 455 634.0 446.0 Q643 437 652.5 435.0 Q662 433 676.5 433.5 Q691 434 700.0 440.5 Q709 447 718.5 449.0 Q728 451 741.0 449.5 Q754 448 765.0 449.0 Q776 450 780.0 456.0 Q784 462 791.0 466.5 Q798 471 810.0 471.5 Q822 472 828.0 476.5 Q834 481 841.0 476.5 Q848 472 866.5 476.5 Q885 481 897.0 484.0 Q909 487 913.5 482.5 Q918 478 919.5 472.0 L921 466"/>
<path d="M921 466 Q930 448 939.0 438.0 Q948 428 961.5 425.0 Q975 422 1007.5 421.5 Q1040 421 1067.5 421.0 Q1095 421 1115.0 422.5 Q1135 424 1146.5 426.5 Q1158 429 1171.5 434.5 Q1185 440 1195.0 446.0 Q1205 452 1242.5 452.8 Q1280 453.5 1335.0 453.5 Q1390 453.5 1412.0 453.8 Q1434 454 1447.5 457.0 Q1461 460 1493.0 470.5 Q1525 481 1549.5 494.0 Q1574 507 1587.0 521.0 L1600 535"/>
<path d="M1045 155 Q1045 251 1043.0 257.0 Q1041 263 1041.0 311.5 Q1041 360 1041.8 390.0 Q1042.5 420 1041.2 432.5 Q1040 445 1043.0 457.5 Q1046 470 1053.5 481.0 Q1061 492 1068.0 503.5 Q1075 515 1082.5 527.5 Q1090 540 1095.0 549.0 L1100 558"/>
<path d="M872 240 Q880 252 886.5 257.0 Q893 262 909.5 271.0 Q926 280 942.0 290.5 Q958 301 971.0 311.5 Q984 322 991.0 336.0 Q998 350 1003.0 360.5 Q1008 371 1017.0 376.0 Q1026 381 1033.5 383.5 L1041 386"/>
<path d="M1332 155 Q1300 163 1284.5 167.5 Q1269 172 1257.0 183.0 Q1245 194 1230.0 212.0 Q1215 230 1202.5 245.0 Q1190 260 1179.5 271.0 Q1169 282 1151.0 303.5 Q1133 325 1116.5 334.0 Q1100 343 1087.5 358.5 Q1075 374 1066.0 380.5 Q1057 387 1039.5 393.0 Q1022 399 1005.0 407.5 Q988 416 981.5 419.0 L975 422"/>
<path d="M921 466 Q924 490 925.5 501.5 Q927 513 932.5 522.0 Q938 531 953.5 526.0 Q969 521 992.5 520.5 Q1016 520 1038.0 520.0 Q1060 520 1077.5 521.0 Q1095 522 1103.5 528.5 Q1112 535 1124.5 524.0 Q1137 513 1144.5 501.5 Q1152 490 1155.0 475.0 Q1158 460 1158.0 444.5 L1158 429"/>
<path d="M984 283 Q998 271 1010.0 267.0 Q1022 263 1031.5 263.5 Q1041 264 1054.5 267.5 Q1068 271 1088.0 279.0 Q1108 287 1117.0 295.5 Q1126 304 1140.5 307.0 Q1155 310 1162.0 317.0 Q1169 324 1172.0 337.0 Q1175 350 1177.5 365.0 Q1180 380 1180.0 400.0 Q1180 420 1176.0 440.0 Q1172 460 1166.0 480.0 Q1160 500 1155.0 529.0 L1150 558"/>
</g>
<circle cx="476" cy="182.5" r="3.2" fill="#fff" stroke="#555" stroke-width="1.4"/>
<circle cx="549" cy="290.5" r="3.2" fill="#fff" stroke="#555" stroke-width="1.4"/>
<circle cx="730" cy="281" r="3.2" fill="#fff" stroke="#555" stroke-width="1.4"/>
<circle cx="872.6" cy="239.8" r="4.5" fill="#fff" stroke="#555" stroke-width="1.4"/>
<circle cx="1002" cy="297" r="3.6" fill="#fff" stroke="#555" stroke-width="1.4"/>
<circle cx="1042" cy="352" r="3.8" fill="#fff" stroke="#555" stroke-width="1.4"/>
<circle cx="1042" cy="453" r="4.3" fill="#fff" stroke="#555" stroke-width="1.4"/>
<circle cx="983" cy="476.5" r="3.6" fill="#fff" stroke="#555" stroke-width="1.4"/>
<circle cx="1134" cy="452" r="3.6" fill="#fff" stroke="#555" stroke-width="1.4"/>
<circle cx="1245" cy="194" r="3.2" fill="#fff" stroke="#555" stroke-width="1.4"/>
<circle cx="1201.5" cy="242.5" r="3.2" fill="#fff" stroke="#555" stroke-width="1.4"/>
<circle cx="1373" cy="439.5" r="3.3" fill="#fff" stroke="#555" stroke-width="1.4"/>
<circle cx="1434" cy="454.5" r="3.3" fill="#fff" stroke="#555" stroke-width="1.4"/>
<circle cx="728" cy="451" r="3.2" fill="#fff" stroke="#555" stroke-width="1.4"/>
<circle cx="395" cy="535.5" r="3.3" fill="#fff" stroke="#555" stroke-width="1.4"/>
<text x="476" y="178.5" font-size="12.5" fill="#484848" text-anchor="middle" stroke="#fffdf3" stroke-width="2.8" stroke-linejoin="round" letter-spacing="0.4" opacity="0.9">Granby</text>
<text x="476" y="178.5" font-size="12.5" fill="#484848" text-anchor="middle" stroke="#484848" stroke-width="0.35" letter-spacing="0.4">Granby</text>
<text x="549" y="286.5" font-size="12.5" fill="#484848" text-anchor="middle" stroke="#fffdf3" stroke-width="2.8" stroke-linejoin="round" letter-spacing="0.4" opacity="0.9">Fraser</text>
<text x="549" y="286.5" font-size="12.5" fill="#484848" text-anchor="middle" stroke="#484848" stroke-width="0.35" letter-spacing="0.4">Fraser</text>
<text x="730" y="275.5" font-size="12.5" fill="#484848" text-anchor="middle" stroke="#fffdf3" stroke-width="2.8" stroke-linejoin="round" letter-spacing="0.4" opacity="0.9">Nederland</text>
<text x="730" y="275.5" font-size="12.5" fill="#484848" text-anchor="middle" stroke="#484848" stroke-width="0.35" letter-spacing="0.4">Nederland</text>
<text x="873.5" y="230.8" font-size="18" fill="#3a3a3a" text-anchor="middle" stroke="#fffdf3" stroke-width="2.8" stroke-linejoin="round" letter-spacing="0.25" opacity="0.9">Boulder</text>
<text x="873.5" y="230.8" font-size="18" fill="#3a3a3a" text-anchor="middle" stroke="#3a3a3a" stroke-width="0.5" letter-spacing="0.25">Boulder</text>
<text x="1002.5" y="291.5" font-size="12.5" fill="#484848" text-anchor="middle" stroke="#fffdf3" stroke-width="2.8" stroke-linejoin="round" letter-spacing="0.4" opacity="0.9">Broomfield</text>
<text x="1002.5" y="291.5" font-size="12.5" fill="#484848" text-anchor="middle" stroke="#484848" stroke-width="0.35" letter-spacing="0.4">Broomfield</text>
<text x="1042" y="346.5" font-size="12.5" fill="#484848" text-anchor="middle" stroke="#fffdf3" stroke-width="2.8" stroke-linejoin="round" letter-spacing="0.4" opacity="0.9">Thornton</text>
<text x="1042" y="346.5" font-size="12.5" fill="#484848" text-anchor="middle" stroke="#484848" stroke-width="0.35" letter-spacing="0.4">Thornton</text>
<text x="1043" y="441.5" font-size="23.2" fill="#363636" text-anchor="middle" stroke="#fffdf3" stroke-width="2.8" stroke-linejoin="round" letter-spacing="-0.1" opacity="0.9">Denver</text>
<text x="1043" y="441.5" font-size="23.2" fill="#363636" text-anchor="middle" stroke="#363636" stroke-width="0.55" letter-spacing="-0.1">Denver</text>
<text x="983" y="470.5" font-size="12.5" fill="#484848" text-anchor="middle" stroke="#fffdf3" stroke-width="2.8" stroke-linejoin="round" letter-spacing="0.4" opacity="0.9">Lakewood</text>
<text x="983" y="470.5" font-size="12.5" fill="#484848" text-anchor="middle" stroke="#484848" stroke-width="0.35" letter-spacing="0.4">Lakewood</text>
<text x="1134.3" y="445.8" font-size="12.5" fill="#484848" text-anchor="middle" stroke="#fffdf3" stroke-width="2.8" stroke-linejoin="round" letter-spacing="0.4" opacity="0.9">Aurora</text>
<text x="1134.3" y="445.8" font-size="12.5" fill="#484848" text-anchor="middle" stroke="#484848" stroke-width="0.35" letter-spacing="0.4">Aurora</text>
<text x="1225" y="461" font-size="16.5" fill="#6a6a6a" text-anchor="middle" stroke="#fffdf3" stroke-width="2.8" stroke-linejoin="round" letter-spacing="0.1" opacity="0.9">Aetna Estates</text>
<text x="1225" y="461" font-size="16.5" fill="#6a6a6a" text-anchor="middle" stroke="#6a6a6a" stroke-width="0.2" letter-spacing="0.1">Aetna Estates</text>
<text x="1245" y="188.5" font-size="12.5" fill="#484848" text-anchor="middle" stroke="#fffdf3" stroke-width="2.8" stroke-linejoin="round" letter-spacing="0.4" opacity="0.9">Hudson</text>
<text x="1245" y="188.5" font-size="12.5" fill="#484848" text-anchor="middle" stroke="#484848" stroke-width="0.35" letter-spacing="0.4">Hudson</text>
<text x="1201.5" y="236.5" font-size="12.5" fill="#484848" text-anchor="middle" stroke="#fffdf3" stroke-width="2.8" stroke-linejoin="round" letter-spacing="0.4" opacity="0.9">Lochbuie</text>
<text x="1201.5" y="236.5" font-size="12.5" fill="#484848" text-anchor="middle" stroke="#484848" stroke-width="0.35" letter-spacing="0.4">Lochbuie</text>
<text x="1373" y="433.5" font-size="12.5" fill="#484848" text-anchor="middle" stroke="#fffdf3" stroke-width="2.8" stroke-linejoin="round" letter-spacing="0.4" opacity="0.9">Bennett</text>
<text x="1373" y="433.5" font-size="12.5" fill="#484848" text-anchor="middle" stroke="#484848" stroke-width="0.35" letter-spacing="0.4">Bennett</text>
<text x="1434" y="447.5" font-size="12.5" fill="#484848" text-anchor="middle" stroke="#fffdf3" stroke-width="2.8" stroke-linejoin="round" letter-spacing="0.4" opacity="0.9">Strasburg</text>
<text x="1434" y="447.5" font-size="12.5" fill="#484848" text-anchor="middle" stroke="#484848" stroke-width="0.35" letter-spacing="0.4">Strasburg</text>
<text x="728" y="444.5" font-size="12.5" fill="#484848" text-anchor="middle" stroke="#fffdf3" stroke-width="2.8" stroke-linejoin="round" letter-spacing="0.4" opacity="0.9">Idaho Springs</text>
<text x="728" y="444.5" font-size="12.5" fill="#484848" text-anchor="middle" stroke="#484848" stroke-width="0.35" letter-spacing="0.4">Idaho Springs</text>
<text x="396" y="529.5" font-size="12.5" fill="#484848" text-anchor="middle" stroke="#fffdf3" stroke-width="2.8" stroke-linejoin="round" letter-spacing="0.4" opacity="0.9">Silverthorne</text>
<text x="396" y="529.5" font-size="12.5" fill="#484848" text-anchor="middle" stroke="#484848" stroke-width="0.35" letter-spacing="0.4">Silverthorne</text>
<text x="1581.5" y="556" font-size="16.5" fill="#6a6a6a" text-anchor="middle" stroke="#fffdf3" stroke-width="2.8" stroke-linejoin="round" letter-spacing="0.1" opacity="0.9">Deer</text>
<text x="1581.5" y="556" font-size="16.5" fill="#6a6a6a" text-anchor="middle" stroke="#6a6a6a" stroke-width="0.2" letter-spacing="0.1">Deer</text>
<rect x="900.5" y="172.7" width="39.5" height="20.30000000000001" rx="10.150000000000006" fill="#fff" stroke="#555" stroke-width="1.3"/>
<text x="920.25" y="187.15" font-size="12" fill="#666" text-anchor="middle">119</text>
<rect x="884" y="396" width="32" height="19.600000000000023" rx="9.800000000000011" fill="#fff" stroke="#555" stroke-width="1.3"/>
<text x="900.0" y="410.1" font-size="12" fill="#666" text-anchor="middle">93</text>
<rect x="1067" y="270.7" width="41" height="19.3" rx="2" fill="#fff" stroke="#555" stroke-width="1.3"/><text x="1087.5" y="285" font-size="13" font-weight="bold" fill="#555" text-anchor="middle">E470</text>
<g transform="translate(853 149.0)"><path d="M3,1 C5,3 8,3 10,1 L13,0 L16,1 C18,3 21,3 23,1 L26,4 C24,8 25,13 25,16 C25,21 18,23 13,25 C8,23 1,21 1,16 C1,13 2,8 0,4 Z" fill="#fff" stroke="#555" stroke-width="1.3" stroke-linejoin="round"/><text x="13" y="16.5" font-size="12" fill="#666" text-anchor="middle">36</text></g>
<g transform="translate(1125.7 245.3)"><path d="M3,1 C5,3 8,3 10,1 L13,0 L16,1 C18,3 21,3 23,1 L26,4 C24,8 25,13 25,16 C25,21 18,23 13,25 C8,23 1,21 1,16 C1,13 2,8 0,4 Z" fill="#fff" stroke="#555" stroke-width="1.3" stroke-linejoin="round"/><text x="13" y="16.5" font-size="12" fill="#666" text-anchor="middle">85</text></g>
<g transform="translate(1033 140.5)"><path d="M0.5,0.3 C4,1.8 8,1.8 12,0.3 C16,1.8 20,1.8 23.500,0.300 C24.500,9 23,21 12,28.500 C1,21 -0.500,9 0.500,0.300 Z" fill="#fff" stroke="#fff" stroke-width="1.6" stroke-linejoin="round"/><path d="M1,0.500 C4,2 8,2 12,0.500 C16,2 20,2 23,0.500 L24,5.400 L0,5.400 Z" fill="#e84a1b"/><path d="M0,6.600 L24,6.600 C24.300,14 22,22 12,28 C2,22 -0.300,14 0,6.600 Z" fill="#1560bd"/><text x="12" y="20.500" font-size="12" font-weight="bold" fill="#f4f8ff" text-anchor="middle">25</text></g>
<g transform="translate(1167 259.2)"><path d="M0.5,0.3 C4,1.8 8,1.8 12,0.3 C16,1.8 20,1.8 23.500,0.300 C24.500,9 23,21 12,28.500 C1,21 -0.500,9 0.500,0.300 Z" fill="#fff" stroke="#fff" stroke-width="1.6" stroke-linejoin="round"/><path d="M1,0.500 C4,2 8,2 12,0.500 C16,2 20,2 23,0.500 L24,5.400 L0,5.400 Z" fill="#e84a1b"/><path d="M0,6.600 L24,6.600 C24.300,14 22,22 12,28 C2,22 -0.300,14 0,6.600 Z" fill="#1560bd"/><text x="12" y="20.500" font-size="12" font-weight="bold" fill="#f4f8ff" text-anchor="middle">76</text></g>
<g transform="translate(910 452)"><path d="M0.5,0.3 C4,1.8 8,1.8 12,0.3 C16,1.8 20,1.8 23.500,0.300 C24.500,9 23,21 12,28.500 C1,21 -0.500,9 0.500,0.300 Z" fill="#fff" stroke="#fff" stroke-width="1.6" stroke-linejoin="round"/><path d="M1,0.500 C4,2 8,2 12,0.500 C16,2 20,2 23,0.500 L24,5.400 L0,5.400 Z" fill="#e84a1b"/><path d="M0,6.600 L24,6.600 C24.300,14 22,22 12,28 C2,22 -0.300,14 0,6.600 Z" fill="#1560bd"/><text x="12" y="20.500" font-size="12" font-weight="bold" fill="#f4f8ff" text-anchor="middle">70</text></g>
<g transform="translate(1049.2 478)"><path d="M0.5,0.3 C4,1.8 8,1.8 12,0.3 C16,1.8 20,1.8 23.500,0.300 C24.500,9 23,21 12,28.500 C1,21 -0.500,9 0.500,0.300 Z" fill="#fff" stroke="#fff" stroke-width="1.6" stroke-linejoin="round"/><path d="M1,0.500 C4,2 8,2 12,0.500 C16,2 20,2 23,0.500 L24,5.400 L0,5.400 Z" fill="#e84a1b"/><path d="M0,6.600 L24,6.600 C24.300,14 22,22 12,28 C2,22 -0.300,14 0,6.600 Z" fill="#1560bd"/><text x="12" y="20.500" font-size="12" font-weight="bold" fill="#f4f8ff" text-anchor="middle">25</text></g>
<g transform="translate(1514 466)"><path d="M0.5,0.3 C4,1.8 8,1.8 12,0.3 C16,1.8 20,1.8 23.500,0.300 C24.500,9 23,21 12,28.500 C1,21 -0.500,9 0.500,0.300 Z" fill="#fff" stroke="#fff" stroke-width="1.6" stroke-linejoin="round"/><path d="M1,0.500 C4,2 8,2 12,0.500 C16,2 20,2 23,0.500 L24,5.400 L0,5.400 Z" fill="#e84a1b"/><path d="M0,6.600 L24,6.600 C24.300,14 22,22 12,28 C2,22 -0.300,14 0,6.600 Z" fill="#1560bd"/><text x="12" y="20.500" font-size="12" font-weight="bold" fill="#f4f8ff" text-anchor="middle">70</text></g>
<g transform="translate(1224 362)" fill="#3b82f6"><path d="M-1,-7 h2 v5 l6,3 v2 l-6,-1.500 v3.500 l2,1.500 v1 l-3,-0.700 l-3,0.700 v-1 l2,-1.500 v-3.500 l-6,1.500 v-2 l6,-3 z"/></g>
<g fill="#5cb9f6"><path d="M1316,240 l4,-1 l2,-5 l3,3 l4,1 l-2,5 l-3,3 l-2,-4 z"/></g>
<g transform="translate(1006 186)"><path d="M0,0 H32.6 V32.6 H24.300 L16.300,40.800 L8.300,32.6 H0 Z" fill="#fdb450" stroke="#d98d30" stroke-width="1.100"/>
<path d="M6.800,22.800 L6.800,17 L11.600,10.300 L15,13.300 L19.500,18.600 L23.500,21.300 L23.500,22.800 Z" fill="#000" stroke="#000" stroke-width="0.8" stroke-linejoin="round"/><circle cx="18.600" cy="11.200" r="1.800" fill="#000"/><circle cx="24.800" cy="16.700" r="1.800" fill="#000"/>
</g>
<g transform="translate(879.3 318)"><path d="M0,0 H32.6 V32.6 H24.300 L16.300,40.800 L8.300,32.6 H0 Z" fill="#fdb450" stroke="#d98d30" stroke-width="1.100"/>
<path d="M6.800,22.800 L6.800,17 L11.600,10.300 L15,13.300 L19.500,18.600 L23.500,21.300 L23.500,22.800 Z" fill="#000" stroke="#000" stroke-width="0.8" stroke-linejoin="round"/><circle cx="18.600" cy="11.200" r="1.800" fill="#000"/><circle cx="24.800" cy="16.700" r="1.800" fill="#000"/>
</g>
<g transform="translate(1068 435.6)"><path d="M0,0 H32.6 V32.6 H24.300 L16.300,40.800 L8.300,32.6 H0 Z" fill="#fdb450" stroke="#d98d30" stroke-width="1.100"/>
<path d="M8.100,5.900 H18.200 V8.500 H21.500 L23.700,11 V13.800 H8.100 Z" fill="#000"/><circle cx="10.900" cy="14.500" r="2.100" fill="#000"/><circle cx="20.800" cy="14.500" r="2.100" fill="#000"/><path d="M9,20 h6 v3 h-6z" fill="#000"/>
</g>
<g transform="translate(1077.6 455.9)"><path d="M0,0 H32.6 V32.6 H24.300 L16.300,40.800 L8.300,32.6 H0 Z" fill="#fdb450" stroke="#d98d30" stroke-width="1.100"/>
<path d="M6.800,22.800 L6.800,17 L11.600,10.300 L15,13.300 L19.500,18.600 L23.500,21.300 L23.500,22.800 Z" fill="#000" stroke="#000" stroke-width="0.8" stroke-linejoin="round"/><circle cx="18.600" cy="11.200" r="1.800" fill="#000"/><circle cx="24.800" cy="16.700" r="1.800" fill="#000"/>
</g>
<circle cx="1575.5" cy="527.5" r="14.500" fill="#fff"/><circle cx="1575.5" cy="527.5" r="9.300" fill="#000"/><rect x="1574" y="526" width="3" height="7" fill="#fff"/><circle cx="1575.5" cy="522.700" r="1.700" fill="#fff"/>
</svg></div>
<div class="btn" id="b1"><span style="position:absolute;left:33px;top:-1px;font-weight:normal;font-size:20px">+</span><span style="position:absolute;left:57px;top:0;letter-spacing:.25px">Add depot</span></div>
<div class="btn" id="b2"><svg style="position:absolute;left:60px;top:14px" width="19" height="18" viewBox="0 0 19 18" fill="none" stroke="#c9e2fd" stroke-width="1.600" stroke-linejoin="round" stroke-linecap="round"><path d="M12.500 2.200a2.300 2.300 0 0 1 3.300 3.300L6 15.300l-4.200 1 1-4.200z"/></svg><span style="position:absolute;left:87px;top:0">Edit</span></div>
<div class="btn" id="b3"><span style="position:absolute;left:52px;top:-1px">−</span><span style="position:absolute;left:75.500px;top:0;letter-spacing:.15px">Delete</span></div>
<div id="cb"></div><div id="cbl">Show disabled depots</div>
<div id="srch"><svg style="position:absolute;left:12px;top:11px" width="24" height="24" viewBox="0 0 24 24" fill="none" stroke="#8a8f96" stroke-width="1.500" stroke-linecap="round"><circle cx="9.600" cy="9.600" r="7"/><path d="M14.800 15l6 5.800"/></svg><span>Search...</span></div>
<div id="tbl">
<div class="hl" style="top:42px"></div>
<div class="hl" style="top:85px"></div>
<div class="hl" style="top:127px"></div>
<div class="hl" style="top:169px"></div>
<div class="t" style="left:17px;top:10.400px">Enabled</div>
<svg style="position:absolute;left:96px;top:15px" width="14" height="10" viewBox="0 0 14 10" fill="none" stroke="#14181d" stroke-width="1.700" stroke-linecap="round" stroke-linejoin="round"><path d="M2 7.800l5-5 5 5"/></svg>
<div class="t" style="left:160px;top:10.400px">Name</div>
<div class="t" style="left:345px;top:10.400px">Type</div>
<div class="t" style="letter-spacing:.15px;left:563px;top:10.400px">Address</div>
<div class="t" style="letter-spacing:.16px;left:693px;top:10.400px">Visit duration</div>
<div class="t" style="left:863px;top:10.400px">Vehicle features</div>

<div class="tg dis" style="top:53px"><b></b></div>
<div class="t" style="left:127.500px;top:52.500px;font-size:19.500px;line-height:22px;letter-spacing:0">★</div>
<div class="t" style="letter-spacing:.3px;left:160px;top:54px">Depot</div>
<svg style="position:absolute;left:349px;top:55px" width="16" height="19" viewBox="0 0 16 19" fill="#111"><path d="M0.500 0.800h9.500v7h-9.500zM10.600 2.500h2.200l1.700 2.200v3.100h-3.900z"/><circle cx="3.300" cy="8.600" r="1.400"/><circle cx="11.300" cy="8.600" r="1.400"/><path d="M3.200 11.500h8.200l1.800 2.500h1.300v3h-14v-3h1.300z"/><circle cx="3.600" cy="17.200" r="1.300"/><circle cx="11.400" cy="17.200" r="1.300"/><path d="M4.200 12.600h6.300l0.900 1.400h-8.100z" fill="#fff"/></svg>
<div class="t" style="letter-spacing:.18px;left:370px;top:54px">Vehicle Lot</div>
<div class="t" style="left:693px;top:54px">0<span style="margin-left:3px">min</span></div>

<div class="tg" style="top:96px"><b></b></div>
<div class="t" style="left:160px;top:97px">Denver Regional …</div>
<svg style="position:absolute;left:345px;top:98px" width="23" height="17" viewBox="0 0 23 17" fill="#000"><path d="M0.500 16.300l1-8.800l6.200-6.200l3.300 3l3.700 5.500l3.600 4.500v2z"/><rect x="11" y="1.700" width="3.200" height="3.200" rx="0.800" transform="rotate(20 12.600 3.300)"/><rect x="17.300" y="7.300" width="3.600" height="3.600" rx="0.800" transform="rotate(30 19.100 9.100)"/></svg>
<div class="t" style="left:370.500px;top:97px">Landfill</div>
<div class="t" style="left:563px;top:97px">1830 Weld…</div>
<div class="t" style="left:693px;top:97px">30<span style="margin-left:3px">min</span></div>

<div class="tg" style="top:138px"><b></b></div>
<div class="t" style="left:160px;top:139px">Denver South Tra…</div>
<svg style="position:absolute;left:345px;top:140px" width="23" height="17" viewBox="0 0 23 17" fill="#000"><path d="M0.500 16.300l1-8.800l6.200-6.200l3.300 3l3.700 5.500l3.600 4.500v2z"/><rect x="11" y="1.700" width="3.200" height="3.200" rx="0.800" transform="rotate(20 12.600 3.300)"/><rect x="17.300" y="7.300" width="3.600" height="3.600" rx="0.800" transform="rotate(30 19.100 9.100)"/></svg>
<div class="t" style="left:370.500px;top:139px">Landfill</div>
<div class="t" style="left:563px;top:139px">7750 Cher…</div>
<div class="t" style="left:693px;top:139px">30<span style="margin-left:3px">min</span></div>

<div class="tg" style="top:180px"><b></b></div>
<div class="t" style="letter-spacing:.16px;left:160px;top:181px">Foothills Landfill</div>
<svg style="position:absolute;left:345px;top:182px" width="23" height="17" viewBox="0 0 23 17" fill="#000"><path d="M0.500 16.300l1-8.800l6.200-6.200l3.300 3l3.700 5.500l3.600 4.500v2z"/><rect x="11" y="1.700" width="3.200" height="3.200" rx="0.800" transform="rotate(20 12.600 3.300)"/><rect x="17.300" y="7.300" width="3.600" height="3.600" rx="0.800" transform="rotate(30 19.100 9.100)"/></svg>
<div class="t" style="left:370.500px;top:181px">Landfill</div>
<div class="t" style="left:563px;top:181px">8900 CO-…</div>
<div class="t" style="left:693px;top:181px">30<span style="margin-left:3px">min</span></div>
</div>
</div>
<div style="position:absolute;left:1597px;top:964px;width:0;height:0;border-left:3px solid transparent;border-bottom:3px solid #8e959e"></div>
<div id="sb2"></div><div id="sb3"></div>
</body>
</html>
